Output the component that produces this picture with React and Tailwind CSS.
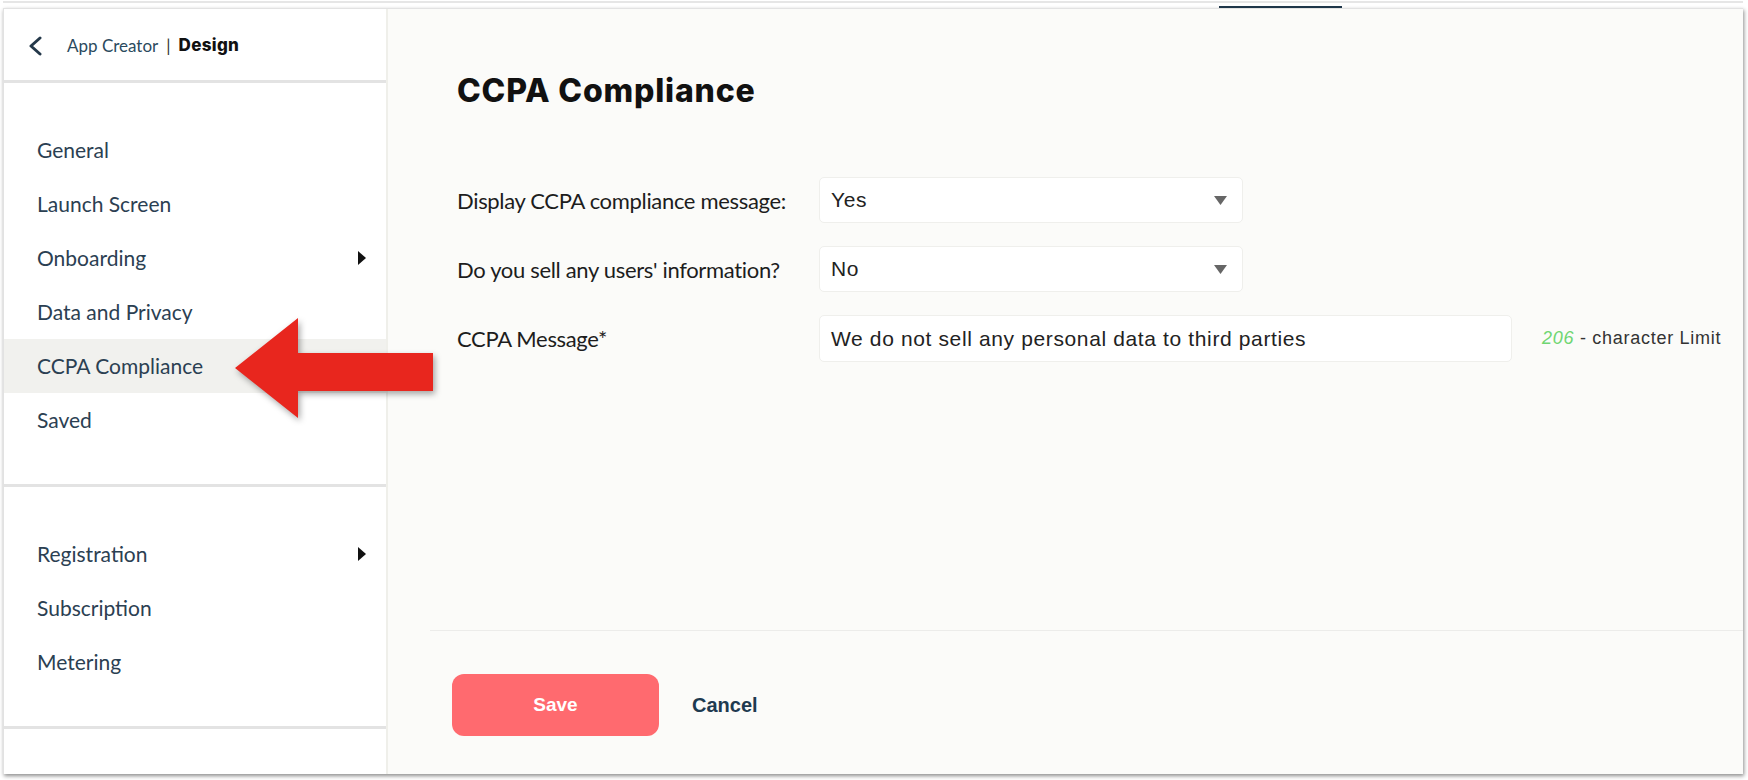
import React from 'react';

const groupOne = [
  { label: 'General' },
  { label: 'Launch Screen' },
  { label: 'Onboarding', arrow: true },
  { label: 'Data and Privacy' },
  { label: 'CCPA Compliance', active: true },
  { label: 'Saved' },
];

const groupTwo = [
  { label: 'Registration', arrow: true },
  { label: 'Subscription' },
  { label: 'Metering' },
];

const Caret = () => (
  <svg width="8" height="14" viewBox="0 0 8 14">
    <path d="M0 0 L8 7 L0 14 Z" fill="#111" />
  </svg>
);

const NavItem = ({ item }) => (
  <div
    className={`h-[54px] flex items-center justify-between pl-[33px] pr-[20px] text-[21px] text-[#2b4052] ${
      item.active ? 'bg-[#f1f1ee]' : ''
    }`}
  >
    <span>{item.label}</span>
    {item.arrow && <Caret />}
  </div>
);

const SelectBox = ({ value }) => (
  <div className="w-[424px] h-[46px] bg-white border border-[#efefec] rounded-[5px] flex items-center justify-between pl-[11px] pr-[15px] text-[21px] tracking-[0.03em] text-[#222] font-['Liberation_Sans',sans-serif]">
    <span>{value}</span>
    <svg width="13" height="9" viewBox="0 0 13 9">
      <path d="M0 0 H13 L6.5 9 Z" fill="#666" />
    </svg>
  </div>
);

const FormRow = ({ label, children }) => (
  <div className="flex items-center">
    <div className="w-[362px] text-[22px] tracking-[-0.015em] text-[#1d1d1d]">{label}</div>
    {children}
  </div>
);

export default function App() {
  return (
    <div className="w-[1748px] h-[780px] bg-white overflow-hidden relative font-['Lato',sans-serif]">
      {/* cropped top bar */}
      <div className="ml-[3px] mt-px w-[1740px] h-[7px] border-t-2 border-[#e6e6e6] flex items-end">
        <div className="ml-[1216px] w-[123px] h-[2px] bg-[#1e3649]" />
      </div>

      {/* window */}
      <div className="ml-[3px] w-[1740px] h-[766px] flex border-l border-t border-[#e2e2e2] shadow-[1px_2px_4px_rgba(0,0,0,0.45)]">
        {/* Sidebar */}
        <div className="w-[384px] bg-white border-r-2 border-[#efefea] flex flex-col">
          <div className="h-[74px] flex items-center pl-[24px] pt-[2px] border-b-[3px] border-[#e3e3e3]">
            <svg width="14" height="20" viewBox="0 0 14 20" fill="none">
              <path d="M12 2 L3 10 L12 18" stroke="#24384a" strokeWidth="3" strokeLinecap="round" strokeLinejoin="round" />
            </svg>
            <span className="ml-[25px] text-[17px] text-[#2b4a5e]">App Creator</span>
            <span className="ml-[8px] text-[17px] text-[#333]">|</span>
            <span className="ml-[8px] text-[17px] font-extrabold tracking-[0.02em] text-[#111] font-['Inter',sans-serif]">Design</span>
          </div>

          <div className="pt-[40px] pb-[37px] border-b-[3px] border-[#e3e3e3]">
            {groupOne.map((item) => (
              <NavItem key={item.label} item={item} />
            ))}
          </div>

          <div className="pt-[40px] pb-[37px] border-b-[3px] border-[#e3e3e3]">
            {groupTwo.map((item) => (
              <NavItem key={item.label} item={item} />
            ))}
          </div>
        </div>

        {/* Main */}
        <div className="flex-1 bg-[#fbfbf9] flex flex-col">
          <div className="flex-1 pl-[69px] pt-[64px]">
            <h1 className="text-[32px] leading-[36px] font-extrabold text-[#111] font-['Inter',sans-serif] tracking-[0.8px]">
              CCPA Compliance
            </h1>

            <div className="mt-[68px] flex flex-col gap-[23px]">
              <FormRow label="Display CCPA compliance message:">
                <SelectBox value="Yes" />
              </FormRow>
              <FormRow label="Do you sell any users' information?">
                <SelectBox value="No" />
              </FormRow>
              <FormRow label="CCPA Message*">
                <div className="w-[693px] h-[47px] bg-white border border-[#efefec] rounded-[5px] flex items-center pl-[11px] text-[21px] tracking-[0.03em] text-[#222] font-['Liberation_Sans',sans-serif]">
                  We do not sell any personal data to third parties
                </div>
                <div className="ml-[30px] text-[18px] tracking-[0.04em] text-[#333] font-['Liberation_Sans',sans-serif]">
                  <span className="italic text-[#6fd672]">206</span> - character Limit
                </div>
              </FormRow>
            </div>
          </div>

          <div className="ml-[42px] border-t border-[#ececea] pt-[43px] pb-[38px] pl-[22px] flex items-center">
            <button className="w-[207px] h-[62px] rounded-[12px] bg-[#ff6a6f] text-white text-[19px] font-bold font-['Liberation_Sans',sans-serif]">
              Save
            </button>
            <button className="ml-[33px] text-[20px] font-bold text-[#1e3a50] font-['Liberation_Sans',sans-serif]">
              Cancel
            </button>
          </div>
        </div>
      </div>

      {/* annotation arrow */}
      <svg
        className="absolute left-0 top-0 drop-shadow-[2px_3px_3px_rgba(0,0,0,0.35)]"
        width="450"
        height="440"
        viewBox="0 0 450 440"
      >
        <path d="M235 368 L298 318 L298 353 L433 353 L433 391 L298 391 L298 418 Z" fill="#e8261e" />
      </svg>
    </div>
  );
}
